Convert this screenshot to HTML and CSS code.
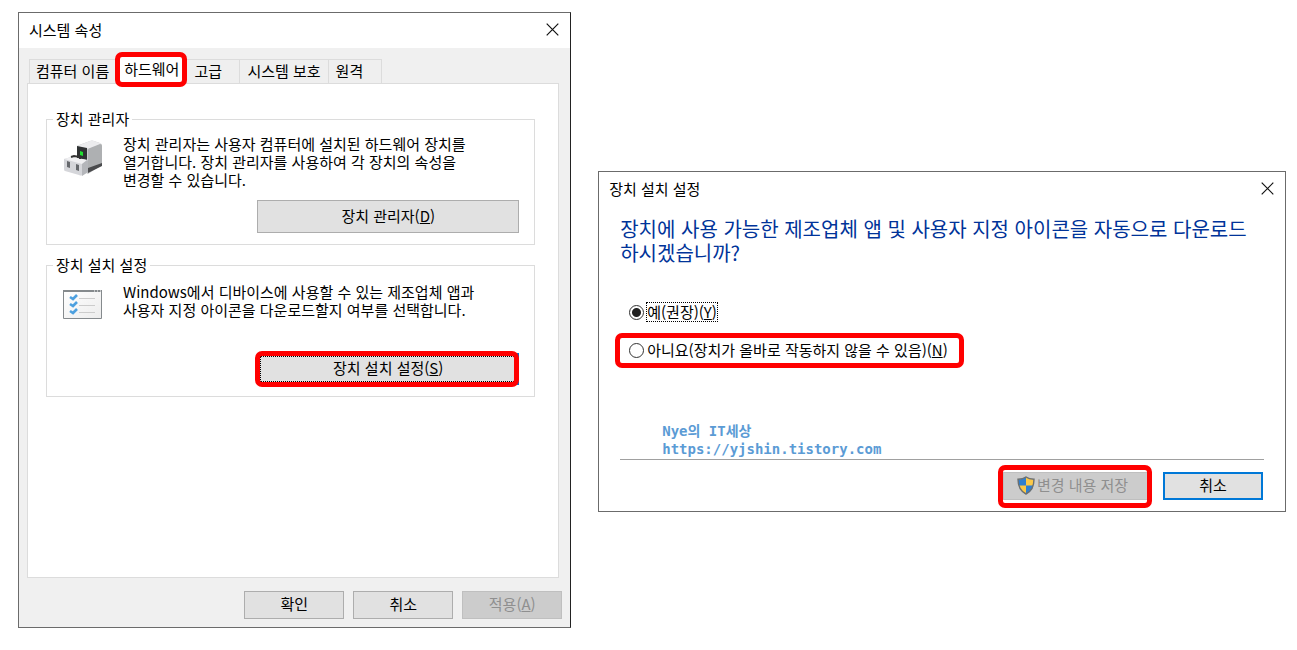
FILE: index.html
```html
<!DOCTYPE html>
<html lang="ko">
	<head>
		<meta charset="UTF-8">
		<title>시스템 속성</title>
		<link rel="stylesheet" href="styles.css">
	</head>
	<body>
		<div class="desktop">
			<!-- 시스템 속성 -->
			<div class="window system">
				<div class="titlebar">
					<h1>시스템 속성</h1>
					<button type="button" class="close" aria-label="닫기">
						<svg width="13" height="13" viewBox="0 0 13 13"><path d="M.7.7l11.6 11.6M12.3.7L.7 12.3" stroke="#111" stroke-width="1.2"/></svg>
					</button>
				</div>
				<div class="system-body">
					<div class="tabs" role="tablist">
						<button type="button" role="tab">컴퓨터 이름</button>
						<button type="button" role="tab" class="active mark" aria-selected="true">하드웨어</button>
						<button type="button" role="tab">고급</button>
						<button type="button" role="tab">시스템 보호</button>
						<button type="button" role="tab">원격</button>
					</div>
					<div class="panel" role="tabpanel">
						<fieldset class="group">
							<legend>장치 관리자</legend>
							<div class="info">
								<svg class="icon" width="40" height="40" viewBox="0 0 40 40">
									<path d="M14 8q0-2 2-2l11-4q2-1 4 0l6 2q2 1 2 3v19l-14 9-11-6z" fill="#c9cacc"/>
									<path d="M14 7l13-5q2-1 4 0l8 3-13 5z" fill="#ececee"/>
									<path d="M25 11q0-2 2-2l10-4q2 0 2 2v18l-14 7z" fill="#aeb0b2"/>
									<path d="M14 7l10 2v17l-10-2z" fill="#2f3233"/>
									<path d="M17 12l3 1v4l-3-1z" fill="#20e030"/>
									<path d="M25 29l14-5v3l-14 7z" fill="#4a4b4d"/>
									<path d="M1 20l7-2 15 3 2 12-5 3q-2 1-4 0L2 32q-1 0-1-2z" fill="#d5d6da"/>
									<path d="M1 20l8-2 16 3-6 4z" fill="#f0f0f2"/>
									<path d="M19 25l5-4q1 0 1 2v10l-6 4z" fill="#b4b6ba"/>
									<path d="M8 18l3-1 6 1v2" fill="none" stroke="#333" stroke-width="2"/>
									<path d="M4 22l3 1v6l-3-1zM13 25l3 1v6l-3-1z" fill="#66696d"/>
								</svg>
								<p>장치 관리자는 사용자 컴퓨터에 설치된 하드웨어 장치를<br>열거합니다. 장치 관리자를 사용하여 각 장치의 속성을<br>변경할 수 있습니다.</p>
							</div>
							<button type="button" class="btn wide">장치 관리자(<u>D</u>)</button>
						</fieldset>
						<fieldset class="group install">
							<legend>장치 설치 설정</legend>
							<div class="info">
								<svg class="icon" width="40" height="31" viewBox="0 0 40 31">
									<defs>
										<linearGradient id="paper" x1="0" y1="0" x2="1" y2="1">
											<stop offset="0" stop-color="#fff"/>
											<stop offset="1" stop-color="#ececec"/>
										</linearGradient>
									</defs>
									<path d="M.5 1.500h38v28H.5z" fill="url(#paper)" stroke="#858a8d"/>
									<path d="M0 1h39v2H0z" fill="#858a8d"/>
									<path d="M31 2h1M34 2h1M37 2h1" stroke="#fff"/>
									<path d="M7 8l3 2 4-4M7 15l3 2 4-4M7 22l3 2 4-4" fill="none" stroke="#4da0df" stroke-width="2.600"/>
									<path d="M16 9.500h16M16 16.500h16M16 23.500h16" stroke="#ccc"/>
								</svg>
								<p>Windows에서 디바이스에 사용할 수 있는 제조업체 앱과<br>사용자 지정 아이콘을 다운로드할지 여부를 선택합니다.</p>
							</div>
							<button type="button" class="btn wide focused mark">장치 설치 설정(<u>S</u>)</button>
						</fieldset>
					</div>
					<div class="actions">
						<button type="button" class="btn">확인</button>
						<button type="button" class="btn">취소</button>
						<button type="button" class="btn" disabled>적용(<u>A</u>)</button>
					</div>
				</div>
			</div>

			<!-- 장치 설치 설정 -->
			<div class="window device">
				<div class="titlebar">
					<h1>장치 설치 설정</h1>
					<button type="button" class="close" aria-label="닫기">
						<svg width="13" height="13" viewBox="0 0 13 13"><path d="M.7.7l11.6 11.6M12.3.7L.7 12.3" stroke="#111" stroke-width="1.2"/></svg>
					</button>
				</div>
				<div class="device-body">
					<h2>장치에 사용 가능한 제조업체 앱 및 사용자 지정 아이콘을 자동으로 다운로드<br>하시겠습니까?</h2>
					<div class="options">
						<div class="option">
							<input type="radio" name="download" id="yes" checked>
							<label for="yes" class="dotted">예(권장)(<u>Y</u>)</label>
						</div>
						<div class="option mark">
							<input type="radio" name="download" id="no">
							<label for="no">아니요(장치가 올바로 작동하지 않을 수 있음)(<u>N</u>)</label>
						</div>
					</div>
					<div class="sign">
						<p>Nye의 IT세상</p>
						<a href="https://yjshin.tistory.com">https://yjshin.tistory.com</a>
					</div>
					<div class="actions">
						<button type="button" class="btn save mark" disabled>
							<svg width="18" height="19" viewBox="0 0 18 19">
								<path d="M9 1c2 1.600 5 2.300 8 2.300 0 7-2 11.700-8 14.700C3 15 1 10.300 1 3.300 4 3.300 7 2.600 9 1z" fill="#fbc847"/>
								<path d="M9 1v8.500H1.600C1.200 7.600 1 5.500 1 3.300 4 3.300 7 2.600 9 1zM9 9.500h7.400c-.9 4-3 6.700-7.400 8.500z" fill="#2f7fd0"/>
								<path d="M9 1c2 1.600 5 2.300 8 2.300 0 7-2 11.700-8 14.700C3 15 1 10.300 1 3.300 4 3.300 7 2.600 9 1z" fill="none" stroke="#6c6f70" stroke-width="1.400"/>
							</svg>변경 내용 저장
						</button>
						<button type="button" class="btn default">취소</button>
					</div>
				</div>
			</div>
		</div>
	</body>
</html>
```

FILE: styles.css
```css
*{
	margin: 0;
	padding: 0;
	box-sizing: border-box;
}
body{
	background: #fff;
	color: #000;
	font: 15px/18px "Noto Sans CJK KR", sans-serif;
}
button{
	font: inherit;
	color: inherit;
}
.desktop{
	display: flex;
	align-items: flex-start;
	gap: 27px;
	padding: 12px 11px 12px 18px;
}
.window{
	border: 1px solid #6b6b6b;
	background: #fff;
	min-width: 0;
}
.system{
	flex: 553;
	border-right-color: #222;
	background: #f0f0f0;
}
.device{
	flex: 688;
	margin-top: 159px;
}

/* 제목 표시줄 */
.titlebar{
	display: flex;
	align-items: center;
	justify-content: space-between;
	height: 35px;
	padding: 0 11px 2px 10px;
	background: #fff;
}
.titlebar h1{
	font-size: 15px;
	font-weight: normal;
}
.close{
	display: flex;
	border: none;
	background: none;
}

/* 빨간 강조 테두리 */
.mark{
	position: relative;
}
.mark::after{
	content: "";
	position: absolute;
	inset: -2px;
	border: 5px solid #f00;
	border-radius: 7px;
	pointer-events: none;
}

/* 탭 */
.system-body{
	padding: 8px;
}
.tabs{
	display: flex;
	align-items: flex-end;
	height: 27px;
	padding-left: 2px;
}
.tabs button{
	min-width: 53px;
	height: 24px;
	padding: 0 7px 2px 7px;
	border: 1px solid #dcdcdc;
	border-left: none;
	border-bottom: none;
	text-align: left;
}
.tabs button:first-child{
	padding-left: 6px;
	border-left: 1px solid #dcdcdc;
}
.tabs button.active{
	height: 27px;
	padding-bottom: 3px;
	background: #fff;
}
.tabs .mark::after{
	inset: -5px -1px -4px -2px;
}
.panel{
	height: 495px;
	margin-right: 3px;
	padding: 26px 23px 0 18px;
	border: 1px solid #dcdcdc;
	background: #fff;
}

/* 그룹 상자 */
.group{
	margin-bottom: 11px;
	padding: 7px 15px 11px 16px;
	border: 1px solid #dcdcdc;
}
.group legend{
	margin-left: -10px;
	padding: 0 3px;
}
.info{
	display: flex;
	gap: 20px;
	height: 54px;
	margin-bottom: 11px;
}
.icon{
	flex: none;
	margin-top: 4px;
}
.info p{
	white-space: nowrap;
}
.install{
	padding-top: 9px;
}
.install .info{
	margin-bottom: 16px;
}
.install .icon{
	margin-top: 6px;
}

/* 버튼 */
.btn{
	width: 100px;
	height: 28px;
	padding-bottom: 2px;
	border: 1px solid #adadad;
	background: #e1e1e1;
}
.btn:disabled{
	border-color: #bfbfbf;
	background: #ccc;
	color: #8f8f8f;
}
.wide{
	display: block;
	width: 262px;
	height: 33px;
	margin-left: auto;
}
.focused{
	height: 32px;
	border: 2px solid #0078d7;
	outline: 1px dotted #000;
	outline-offset: -4px;
}
.focused.mark::after{
	inset: -4px -2px -4px -4px;
}
.default{
	border: 2px solid #0078d7;
}
.actions{
	display: flex;
	justify-content: flex-end;
	gap: 9px;
}
.system .actions{
	padding-top: 13px;
}

/* 장치 설치 설정 */
.device-body{
	padding: 10px 21px 11px 21px;
}
.device-body h2{
	color: #039;
	font-size: 20px;
	font-weight: normal;
	line-height: 24px;
	white-space: nowrap;
}
.options{
	padding: 38px 0 0 9px;
}
.option{
	display: flex;
	align-items: center;
	gap: 3px;
	width: fit-content;
	height: 18px;
	margin-bottom: 20px;
}
.option input{
	appearance: none;
	width: 15px;
	height: 15px;
	border: 1px solid #333;
	border-radius: 50%;
	background: #fff;
}
.option input:checked{
	background: radial-gradient(circle, #222 4px, #fff 5px);
}
.option .dotted{
	outline: 1px dotted #000;
}
.option.mark::after{
	inset: -8px -16px -9px -14px;
}
.sign{
	padding: 43px 0 0 42px;
	color: #5b9bd5;
	font: bold 14px/18px "DejaVu Sans Mono", "Noto Sans CJK KR", monospace;
}
.sign a{
	display: block;
	color: inherit;
	text-decoration: none;
}
.device .actions{
	gap: 14px;
	margin-top: 1px;
	padding: 12px 1px 0 0;
	border-top: 1px solid #a0a0a0;
}
.save{
	display: flex;
	align-items: center;
	justify-content: center;
	gap: 2px;
	width: 146px;
	padding-right: 7px;
}
.save.mark::after{
	inset: -8px -4px -9px -6px;
}
```
